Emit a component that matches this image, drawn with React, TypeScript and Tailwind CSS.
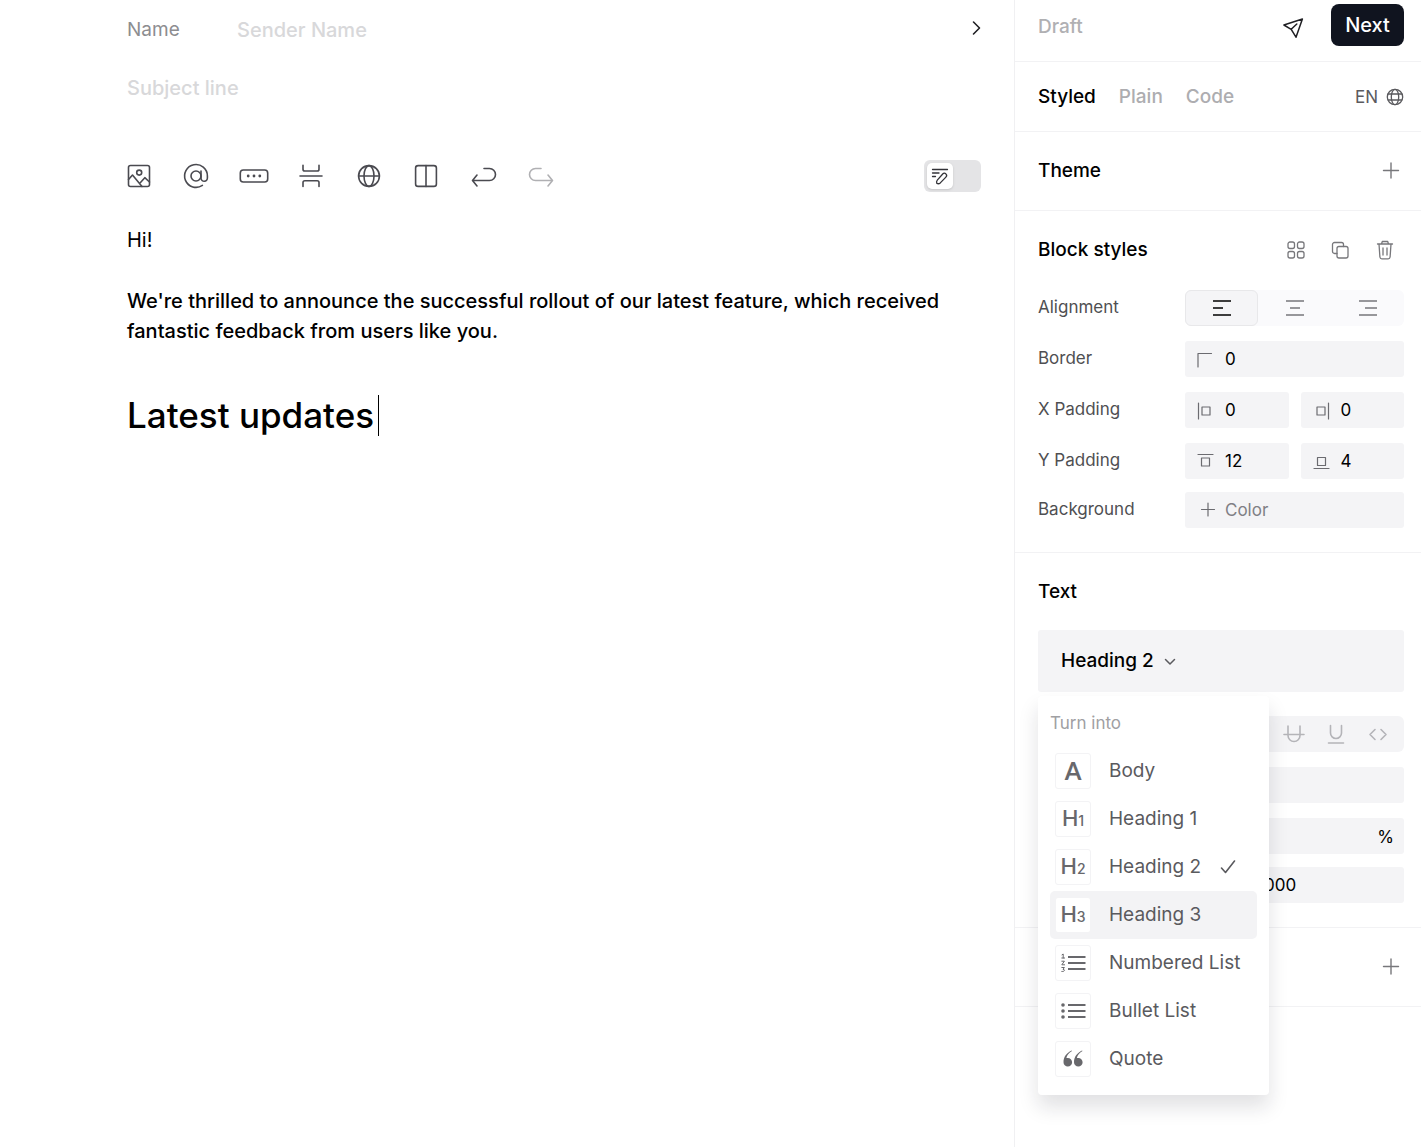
import { useState } from "react";
import type { ReactNode } from "react";

type IconProps = { children: ReactNode; size?: 16 | 18 | 20 | 24; width?: number; className?: string };

const iconSizes = { 16: "size-4", 18: "size-[18px]", 20: "size-5", 24: "size-6" };

function Icon({ children, size = 24, width = 1.6, className = "" }: IconProps) {
  return (
    <svg
      viewBox={`0 0 ${size} ${size}`}
      className={`${iconSizes[size]} shrink-0 overflow-visible ${className}`}
      fill="none"
      stroke="currentColor"
      strokeWidth={width}
      strokeLinecap="round"
      strokeLinejoin="round"
      aria-hidden="true"
    >
      {children}
    </svg>
  );
}

const tools = [
  {
    name: "Image",
    art: (
      <>
        <rect x="1.5" y="1.5" width="21" height="21" rx="2" />
        <circle cx="12.2" cy="8.6" r="2.5" />
        <path d="M1.5 15.5 5.5 11 15 22.5M13.5 18.5l4.3-4.8 4.7 4.3" />
      </>
    ),
  },
  {
    name: "Mention",
    art: (
      <>
        <circle cx="12" cy="12" r="5" />
        <path d="M17 7v7.3a3.2 3.2 0 0 0 6.4-.4V12A11.4 11.4 0 1 0 18.4 21.4" />
      </>
    ),
  },
  {
    name: "Button",
    art: (
      <>
        <rect x="-1.7" y="6" width="27.4" height="12" rx="3" />
        <g fill="currentColor" stroke="none">
          <circle cx="6.2" cy="12" r="1.4" />
          <circle cx="12" cy="12" r="1.4" />
          <circle cx="17.8" cy="12" r="1.4" />
        </g>
      </>
    ),
  },
  {
    name: "Divider",
    art: (
      <path d="M1 12h22M4 1.2v4a1.8 1.8 0 0 0 1.8 1.8h12.4A1.8 1.8 0 0 0 20 5.2v-4M4 22.5v-4A1.8 1.8 0 0 1 5.8 16.7h12.4A1.8 1.8 0 0 1 20 18.5v4" />
    ),
  },
  {
    name: "Link",
    art: (
      <>
        <circle cx="12" cy="12" r="10.4" />
        <ellipse cx="12" cy="12" rx="5" ry="10.4" />
        <path d="M1.6 12h20.8" />
      </>
    ),
  },
  {
    name: "Columns",
    art: (
      <>
        <rect x="1.6" y="1.6" width="20.8" height="20.8" rx="2.5" />
        <path d="M12 1.6v20.8" />
      </>
    ),
  },
  { name: "Undo", art: <path d="M12 4.5h5.5a6 6 0 0 1 0 12H.5M5 11 .5 16.5 5 22" /> },
  { name: "Redo", art: <path d="M12 4.5H6.5a6 6 0 0 0 0 12h17M19 11l4.5 5.5L19 22" /> },
];

const alignments = [
  { name: "Left", d: "M0 2h18M0 9h10M0 16h18" },
  { name: "Center", d: "M0 2h18M4 9h10M0 16h18" },
  { name: "Right", d: "M0 2h18M6 9h12M0 16h18" },
];

function HeadingMark({ level }: { level: number }) {
  return (
    <span className="flex items-baseline leading-none font-medium">
      <span className="text-[22px]">H</span>
      <span className="text-sm">{level}</span>
    </span>
  );
}

const blocks: { name: string; mark: ReactNode }[] = [
  {
    name: "Body",
    mark: <span className="font-['Lato',sans-serif] text-2xl leading-none font-bold">A</span>,
  },
  { name: "Heading 1", mark: <HeadingMark level={1} /> },
  { name: "Heading 2", mark: <HeadingMark level={2} /> },
  { name: "Heading 3", mark: <HeadingMark level={3} /> },
  {
    name: "Numbered List",
    mark: (
      <Icon width={2}>
        <path d="M7 6h17.5M7 12h17.5M7 18h17.5" strokeLinecap="butt" />
        <g strokeWidth="1">
          <path d="M1 3.8 2.2 3v4M.8 7h2.8" />
          <path d="M.8 10.2h2.6L.8 13.8h2.8" />
          <path d="M.8 16.5h2.6L2 18.3c2.2 0 2.2 2.5-1.2 2.2" />
        </g>
      </Icon>
    ),
  },
  {
    name: "Bullet List",
    mark: (
      <Icon width={2}>
        <path d="M7 6h17.5M7 12h17.5M7 18h17.5" strokeLinecap="butt" />
        <g fill="currentColor" stroke="none">
          <circle cx="2" cy="6" r="1.8" />
          <circle cx="2" cy="12" r="1.8" />
          <circle cx="2" cy="18" r="1.8" />
        </g>
      </Icon>
    ),
  },
  {
    name: "Quote",
    mark: (
      <Icon>
        <path
          d="M10.5 3.5C5.5 6 2.5 10 2.5 15.2a4.3 4.3 0 1 0 4.3-4.3c-.6 0-1 .1-1.4.2.5-2.7 2.3-5.1 5.6-7zM21 3.5c-5 2.5-8 6.5-8 11.7a4.3 4.3 0 1 0 4.3-4.3c-.6 0-1 .1-1.4.2.5-2.7 2.3-5.1 5.6-7z"
          fill="currentColor"
          stroke="none"
        />
      </Icon>
    ),
  },
];

function Row({ label, children, last = false }: { label: string; children: ReactNode; last?: boolean }) {
  return (
    <div className={`flex items-center ${last ? "mt-[13px]" : "mt-[15px]"}`}>
      <span className="w-[147px] shrink-0 text-[17px] text-[#4f4f52]">{label}</span>
      <div className="flex min-w-0 flex-1 gap-3">{children}</div>
    </div>
  );
}

function Field({ label, value, art }: { label: string; value: string; art: ReactNode }) {
  return (
    <label className="flex h-9 min-w-0 flex-1 items-center gap-[11px] rounded-[3px] bg-[#f4f4f6] pt-0.5 pl-[11px]">
      <Icon size={18} width={1.2} className="text-[#6b6b70]">
        {art}
      </Icon>
      <input
        aria-label={label}
        defaultValue={value}
        className="w-full min-w-0 bg-transparent text-[17px] text-black outline-none placeholder:text-[#808085]"
        placeholder="Color"
      />
    </label>
  );
}

function Plus() {
  return (
    <Icon size={16} width={1.4}>
      <path d="M8 0v15M.5 7.5h15" />
    </Icon>
  );
}

export default function App() {
  const [selected, setSelected] = useState("Heading 2");
  const title = "text-[19px] leading-7 font-medium text-black";
  const small = "flex items-center justify-center text-[#77777b]";

  return (
    <div className="flex min-h-screen bg-white font-['Inter',sans-serif]">
      <main className="min-w-0 flex-1 pr-[33px] pl-[127px]">
        <div className="flex h-[60px] items-center">
          <label htmlFor="sender" className="w-[110px] text-[19px] text-[#8d8d90]">
            Name
          </label>
          <input
            id="sender"
            placeholder="Sender Name"
            className="min-w-0 flex-1 text-[20px] font-medium outline-none placeholder:text-[#d8d8da]"
          />
          <button aria-label="More sender options" className="flex items-center pb-1">
            <Icon size={18} width={1.6} className="text-[#202024]">
              <path d="m10.5 3 6 6-6 6" />
            </Icon>
          </button>
        </div>
        <div className="flex h-14 items-center">
          <input
            aria-label="Subject line"
            placeholder="Subject line"
            className="w-full text-[20px] font-medium outline-none placeholder:text-[#d8d8da]"
          />
        </div>

        <div className="mt-10 flex h-10 items-center justify-between">
          <div className="flex w-[426px] items-center justify-between text-[#4a4a50]" role="toolbar" aria-label="Insert">
            {tools.map((tool) => (
              <button key={tool.name} aria-label={tool.name} className={tool.name === "Redo" ? "text-[#b0b0b3]" : ""}>
                <Icon>{tool.art}</Icon>
              </button>
            ))}
          </div>
          <label className="flex h-8 w-[57px] items-center rounded-md bg-[#e4e4e6] p-[3px]">
            <input type="checkbox" role="switch" aria-label="Preview" className="sr-only" />
            <span className="flex size-[26px] items-center justify-center rounded-[5px] bg-white shadow-sm">
              <Icon size={16} width={1.3} className="text-[#333338]">
                <path d="M.5 1.5h15M.5 5h6.5M.5 8.5h3" />
                <path d="m10.7 6-5.4 6.1c-.7.8-.8 2.500-.4 3.400 1 .4 2.500.2 3.400-.6l5.600-5.800c2.100-2.200-1.100-5.400-3.200-3.100z" />
              </Icon>
            </span>
          </label>
        </div>

        <article className="text-[20px] leading-[30px] font-medium text-black">
          <p className="mt-[29px] font-normal">Hi!</p>
          <p className="mt-[31px]">
            We're thrilled to announce the successful rollout of our latest feature, which received fantastic feedback
            from users like you.
          </p>
          <h2 className="mt-12 flex items-center text-[35px] leading-[42px]">
            Latest updates
            <span className="ml-1 h-[41px] w-px bg-black" />
          </h2>
        </article>
      </main>

      <aside className="w-[407px] shrink-0 border-l border-[#f0f0f2]">
        <header className="flex h-[62px] items-start border-b border-[#f2f2f4] pt-1 pr-[17px] pl-[23px]">
          <span className="mt-[9px] text-[19px] leading-7 font-medium text-[#b0b0b3]">Draft</span>
          <button aria-label="Send test" className="mt-[14px] mr-7 ml-auto text-[#202024]">
            <Icon size={20} width={1.5}>
              <path d="M.9 7 19.4 1 13 19.2 8.2 11.3zM8.2 11.3l5.6-5.3" />
            </Icon>
          </button>
          <button className="h-[42px] w-[73px] rounded-lg bg-[#10141f] text-[20px] font-medium text-white">Next</button>
        </header>

        <nav className="flex h-[70px] items-center gap-[23px] border-b border-[#f2f2f4] pr-[17px] pl-[23px] text-[19px] leading-7 font-medium text-[#adadb0]">
          <button className="text-black">Styled</button>
          <button>Plain</button>
          <button>Code</button>
          <button className="ml-auto flex items-center gap-2 text-[17px] font-normal text-[#5a5a5e]">
            EN
            <Icon size={18} width={1.3}>
              <circle cx="9" cy="9" r="7.7" />
              <ellipse cx="9" cy="9" rx="3.7" ry="7.7" />
              <path d="M2.3 6h13.4M2.3 12h13.4" />
            </Icon>
          </button>
        </nav>

        <section className="flex h-[79px] items-center justify-between border-b border-[#f2f2f4] pr-[22px] pl-[23px]">
          <h3 className={title}>Theme</h3>
          <button aria-label="Add theme" className="text-[#77777b]">
            <Plus />
          </button>
        </section>

        <section className="border-b border-[#f2f2f4] pt-[25px] pr-[17px] pb-6 pl-[23px]">
          <div className="flex items-center gap-[25px] pr-[9px]">
            <h3 className={`${title} mr-auto`}>Block styles</h3>
            <button aria-label="Components" className={small}>
              <Icon size={20} width={1.3}>
                <rect x="3" y="2" width="6.5" height="6.5" rx="2" />
                <rect x="12.5" y="2" width="6.5" height="6.5" rx="2" />
                <rect x="3" y="11.5" width="6.5" height="6.5" rx="2" />
                <rect x="12.5" y="11.5" width="6.5" height="6.5" rx="2" />
              </Icon>
            </button>
            <button aria-label="Duplicate" className={small}>
              <Icon size={20} width={1.3}>
                <rect x="7" y="6.5" width="11" height="11.5" rx="2" />
                <path d="M7 13.5H4.5a2 2 0 0 1-2-2v-7a2 2 0 0 1 2-2h7a2 2 0 0 1 2 2v2" />
              </Icon>
            </button>
            <button aria-label="Delete" className={small}>
              <Icon size={20} width={1.3}>
                <path d="M2.5 4h15M6.5 4l.8-2.5h5.4l.8 2.5M4 4l.9 13a2 2 0 0 0 2 1.8h6.2a2 2 0 0 0 2-1.8L16 4M8 8v7M12 8v7" />
              </Icon>
            </button>
          </div>

          <div className="mt-[26px] flex items-center">
            <span className="w-[147px] shrink-0 text-[17px] text-[#4f4f52]">Alignment</span>
            <div role="radiogroup" aria-label="Alignment" className="grid h-9 flex-1 grid-cols-3 rounded-md bg-[#fafafc]">
              {alignments.map((item) => (
                <label
                  key={item.name}
                  className="relative flex items-center justify-center rounded-md text-[#77777b] has-checked:border has-checked:border-[#e8e8ea] has-checked:bg-[#f5f5f7] has-checked:text-black"
                >
                  <input
                    type="radio"
                    name="alignment"
                    aria-label={item.name}
                    defaultChecked={item.name === "Left"}
                    className="sr-only"
                  />
                  <Icon size={18}>
                    <path d={item.d} strokeLinecap="butt" />
                  </Icon>
                </label>
              ))}
            </div>
          </div>
          <Row label="Border">
            <Field label="Border" value="0" art={<path d="M2 16V2.5h13.5" />} />
          </Row>
          <Row label="X Padding">
            <Field
              label="Left padding"
              value="0"
              art={
                <>
                  <path d="M2.5 1v16" />
                  <rect x="6" y="5" width="8" height="8" />
                </>
              }
            />
            <Field
              label="Right padding"
              value="0"
              art={
                <>
                  <path d="M16.5 1v16" />
                  <rect x="5" y="5" width="8" height="8" />
                </>
              }
            />
          </Row>
          <Row label="Y Padding">
            <Field
              label="Top padding"
              value="12"
              art={
                <>
                  <path d="M2 1.5h15" />
                  <rect x="5.5" y="5" width="8" height="8" />
                </>
              }
            />
            <Field
              label="Bottom padding"
              value="4"
              art={
                <>
                  <path d="M2 15.5h15" />
                  <rect x="5.5" y="4.5" width="8" height="8" />
                </>
              }
            />
          </Row>
          <Row label="Background" last>
            <Field label="Background color" value="" art={<path d="M12 1v13M5.5 7.5h13" />} />
          </Row>
        </section>

        <section className="border-b border-[#f2f2f4] pt-[25px] pr-[17px] pb-6 pl-[23px]">
          <h3 className={title}>Text</h3>
          <div className="relative mt-6">
            <button
              aria-haspopup="menu"
              aria-expanded="true"
              className="flex h-[62px] w-full items-center gap-2 rounded-[3px] bg-[#f4f4f6] pl-[23px] text-[19px] leading-7 font-medium text-black"
            >
              {selected}
              <Icon size={16} width={1.5} className="text-[#5a5a5e]">
                <path d="m3.5 6.5 4.5 4.5 4.5-4.5" />
              </Icon>
            </button>
            <div className="absolute top-full left-0 z-10 mt-1 w-[231px] rounded bg-white px-3 pb-3 shadow-[0_12px_20px_rgba(20,20,40,0.13)]">
              <p className="flex h-[51px] items-center pt-1 text-[17px] text-[#a0a0a3]">Turn into</p>
              <div role="menu" aria-label="Turn into">
                {blocks.map((block) => (
                  <button
                    key={block.name}
                    role="menuitemradio"
                    aria-checked={selected === block.name}
                    onClick={() => setSelected(block.name)}
                    className={`flex h-12 w-full items-center rounded-[5px] pl-[5px] text-left text-[19px] text-[#5a5a5e] ${
                      block.name === "Heading 3" ? "bg-[#f3f3f5]" : ""
                    }`}
                  >
                    <span className="mr-[18px] flex size-9 shrink-0 items-center justify-center rounded-[3px] border border-[#f3f3f5] bg-white text-[#68686c]">
                      {block.mark}
                    </span>
                    {block.name}
                    {selected === block.name && (
                      <Icon size={18} className="mr-5 ml-auto">
                        <path d="m2.5 10 4 4.5L15.5 3" />
                      </Icon>
                    )}
                  </button>
                ))}
              </div>
            </div>
          </div>
          <div className="mt-6 flex h-9 items-center justify-end gap-[22px] rounded-md bg-[#f4f4f6] pr-4 text-[#b4b4b8]">
            <button aria-label="Strikethrough">
              <Icon size={20} width={1.6}>
                <path d="M4 2v9.5a6 6 0 0 0 12 0V2M0 10.5h20" />
              </Icon>
            </button>
            <button aria-label="Underline">
              <Icon size={20} width={1.6}>
                <path d="M4.5 1.5V9a5.5 5.5 0 0 0 11 0V1.5M2.5 19h15" />
              </Icon>
            </button>
            <button aria-label="Inline code">
              <Icon size={20} width={1.6}>
                <path d="m7 5.500-5 5 5 5M13 5.500l5 5-5 5" />
              </Icon>
            </button>
          </div>
          <div className="mt-[15px] ml-[147px] flex h-9 rounded-[3px] bg-[#f4f4f6]">
            <input aria-label="Font" className="min-w-0 flex-1 bg-transparent px-3 outline-none" />
          </div>
          <label className="mt-[15px] ml-[147px] flex h-9 items-center rounded-[3px] bg-[#f4f4f6] pt-1 pr-[10px] text-[17px] text-black">
            <input aria-label="Line height" className="min-w-0 flex-1 bg-transparent px-3 outline-none" />%
          </label>
          <label className="mt-[13px] ml-[147px] flex h-9 items-center rounded-[3px] bg-[#f4f4f6] pt-0.5 pl-9 text-[17px] text-black">
            <input aria-label="Text color" defaultValue="#000000" className="min-w-0 flex-1 bg-transparent outline-none" />
          </label>
        </section>

        <section className="flex h-[79px] items-center justify-end border-b border-[#f2f2f4] pr-[22px]">
          <button aria-label="Add item" className="text-[#77777b]">
            <Plus />
          </button>
        </section>
      </aside>
    </div>
  );
}
